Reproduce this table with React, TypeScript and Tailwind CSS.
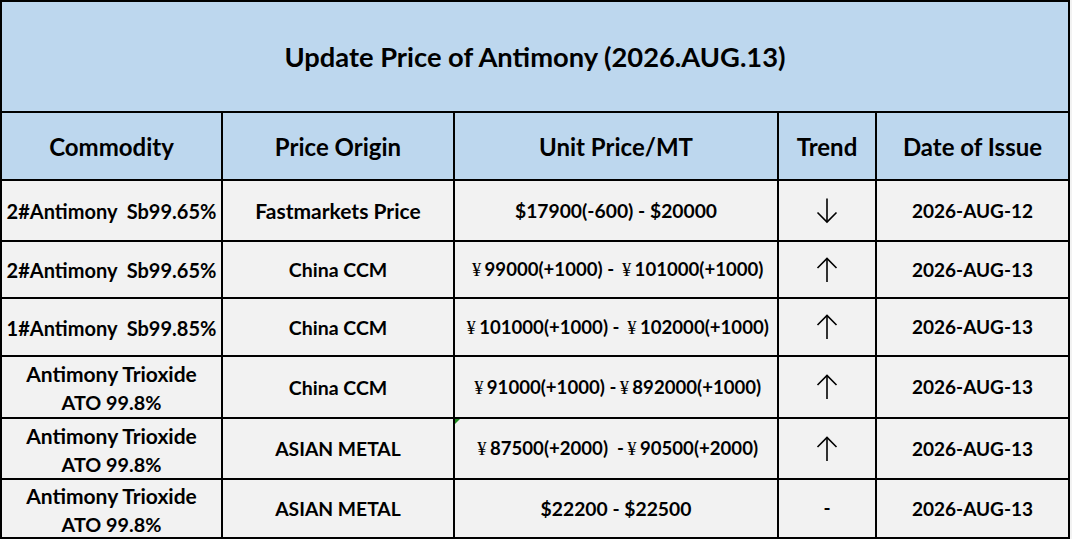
import React from "react";

const F = { fontFamily: "Lato, 'Noto Sans', sans-serif" };

function Yen() {
  return (
    <span
      className="inline-block w-[16px] text-center font-normal"
      style={{ fontFamily: "'Liberation Serif', 'DejaVu Serif', serif" }}
    >
      ¥
    </span>
  );
}

function ArrowUp() {
  return (
    <svg width="22" height="26" viewBox="0 0 22 26" fill="none" stroke="#000" strokeWidth="1.6">
      <path d="M11 1.5 V25" />
      <path d="M1.5 11 L11 1.5 L20.5 11" />
    </svg>
  );
}

function ArrowDown() {
  return (
    <svg width="22" height="26" viewBox="0 0 22 26" fill="none" stroke="#000" strokeWidth="1.6">
      <path d="M11 0.5 V24" />
      <path d="M1.5 14.5 L11 24 L20.5 14.5" />
    </svg>
  );
}

type Row = {
  h: string;
  c1: React.ReactNode;
  c2: React.ReactNode;
  c3: React.ReactNode;
  c4: React.ReactNode;
  c5: string;
  mark?: boolean;
};

const twoLine = (
  <div className="flex flex-col items-center leading-[29px] pt-[1px]">
    <span className="text-[21px]">Antimony Trioxide</span>
    <span className="text-[19.8px]">ATO 99.8%</span>
  </div>
);

const ccm = <span className="text-[19.5px]">China CCM</span>;
const asian = <span className="text-[19.3px]">ASIAN METAL</span>;

const rows: Row[] = [
  {
    h: "h-[59px]",
    c1: <span className="whitespace-pre">2#Antimony  Sb99.65%</span>,
    c2: <span className="text-[21px]">Fastmarkets Price</span>,
    c3: <span className="text-[19.3px]">$17900(-600) - $20000</span>,
    c4: <ArrowDown />,
    c5: "2026-AUG-12",
  },
  {
    h: "h-[55px]",
    c1: <span className="whitespace-pre">2#Antimony  Sb99.65%</span>,
    c2: ccm,
    c3: (
      <span className="whitespace-pre">
        <Yen />99000(+1000) - <Yen />101000(+1000)
      </span>
    ),
    c4: <ArrowUp />,
    c5: "2026-AUG-13",
  },
  {
    h: "h-[56px]",
    c1: <span className="whitespace-pre">1#Antimony  Sb99.85%</span>,
    c2: ccm,
    c3: (
      <span className="whitespace-pre">
        <Yen />101000(+1000) - <Yen />102000(+1000)
      </span>
    ),
    c4: <ArrowUp />,
    c5: "2026-AUG-13",
  },
  {
    h: "h-[60px]",
    c1: twoLine,
    c2: ccm,
    c3: (
      <span className="whitespace-pre">
        <Yen />91000(+1000) -<Yen />892000(+1000)
      </span>
    ),
    c4: <ArrowUp />,
    c5: "2026-AUG-13",
  },
  {
    h: "h-[59px]",
    c1: twoLine,
    c2: asian,
    c3: (
      <span className="whitespace-pre">
        <Yen />87500(+2000)  -<Yen />90500(+2000)
      </span>
    ),
    c4: <ArrowUp />,
    c5: "2026-AUG-13",
    mark: true,
  },
  {
    h: "h-[57px]",
    c1: twoLine,
    c2: asian,
    c3: <span className="text-[19.3px]">$22200 - $22500</span>,
    c4: <span>-</span>,
    c5: "2026-AUG-13",
  },
];

export default function App() {
  return (
    <div className="w-[1072px] h-[539px] bg-[#f2f2f2] overflow-hidden" style={F}>
      <div className="w-[1070px] bg-black p-[2px] grid grid-cols-[219px_230px_322px_96px_191px] gap-[2px] font-bold text-black">
        <div className="col-span-5 h-[109px] bg-[#bdd7ee] flex items-center justify-center text-[27.3px] pt-[1px]">
          Update Price of Antimony (2026.AUG.13)
        </div>
        {["Commodity", "Price Origin", "Unit Price/MT", "Trend", "Date of Issue"].map((t) => (
          <div key={t} className="h-[66px] bg-[#bdd7ee] flex items-center justify-center text-[24px] pt-[1px]">
            {t}
          </div>
        ))}
        {rows.map((r, i) => (
          <React.Fragment key={i}>
            <div className={`${r.h} bg-[#f2f2f2] flex items-center justify-center text-[20px] pt-[1px]`}>{r.c1}</div>
            <div className={`${r.h} bg-[#f2f2f2] flex items-center justify-center pt-[1px]`}>{r.c2}</div>
            <div className={`${r.h} bg-[#f2f2f2] flex items-center justify-center text-[18.6px] relative pt-[1px]`}>
              {r.mark && (
                <span className="absolute left-0 top-0 w-0 h-0 border-t-[5px] border-t-[#1e8a1e] border-r-[5px] border-r-transparent" />
              )}
              {r.c3}
            </div>
            <div className={`${r.h} bg-[#f2f2f2] flex items-center justify-center text-[19px]`}>{r.c4}</div>
            <div className={`${r.h} bg-[#f2f2f2] flex items-center justify-center text-[19px] pt-[1px]`}>{r.c5}</div>
          </React.Fragment>
        ))}
      </div>
    </div>
  );
}
